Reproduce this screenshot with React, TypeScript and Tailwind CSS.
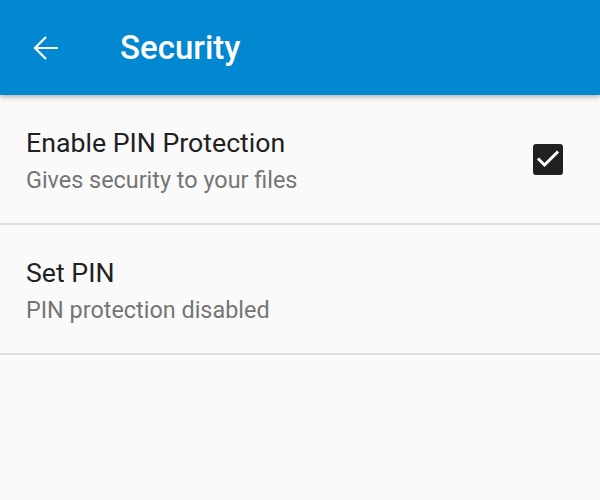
import { useState } from 'react';

function BackArrow() {
  return (
    <svg width="26" height="26" viewBox="0 0 26 26" fill="none">
      <path d="M25 13H2M13 2L2 13l11 11" stroke="white" strokeWidth="2.2" strokeLinecap="butt" />
    </svg>
  );
}

function Row({ title, summary, right }: { title: string; summary: string; right?: React.ReactNode }) {
  return (
    <div className="flex items-center justify-between pl-[26px] pr-[37px] pt-[33px] pb-[29px] border-b-[2px] border-[#dedede]">
      <div className="flex flex-col">
        <div className="text-[26.7px] leading-[31px] text-[#212121]">{title}</div>
        <div className="text-[23.4px] leading-[27px] text-[#757575] mt-[8px]">{summary}</div>
      </div>
      {right}
    </div>
  );
}

export default function App() {
  const [pin, setPin] = useState(true);

  return (
    <div className="w-[600px] h-[500px] bg-[#fafafa] overflow-hidden" style={{ fontFamily: 'Roboto, "Noto Sans", sans-serif' }}>
      <div className="h-[95px] bg-[#0288d1] flex items-center shadow-[0_2px_5px_rgba(0,0,0,0.3)] relative">
        <div className="w-[120px] pl-[33px] flex items-center">
          <BackArrow />
        </div>
        <div className="text-white text-[33px] font-medium">Security</div>
      </div>

      <Row
        title="Enable PIN Protection"
        summary="Gives security to your files"
        right={
          <button
            type="button"
            onClick={() => setPin(p => !p)}
            className={`w-[30px] h-[31px] rounded-[3px] flex items-center justify-center -mt-[4px] ${pin ? 'bg-[#212121]' : 'border-2 border-[#757575]'}`}
          >
            {pin && (
              <svg width="30" height="30" viewBox="0 0 30 30" fill="none">
                <path d="M6 15.5l5.5 5.5L24 8.5" stroke="white" strokeWidth="3" strokeLinecap="square" />
              </svg>
            )}
          </button>
        }
      />
      <Row title="Set PIN" summary="PIN protection disabled" />
    </div>
  );
}
